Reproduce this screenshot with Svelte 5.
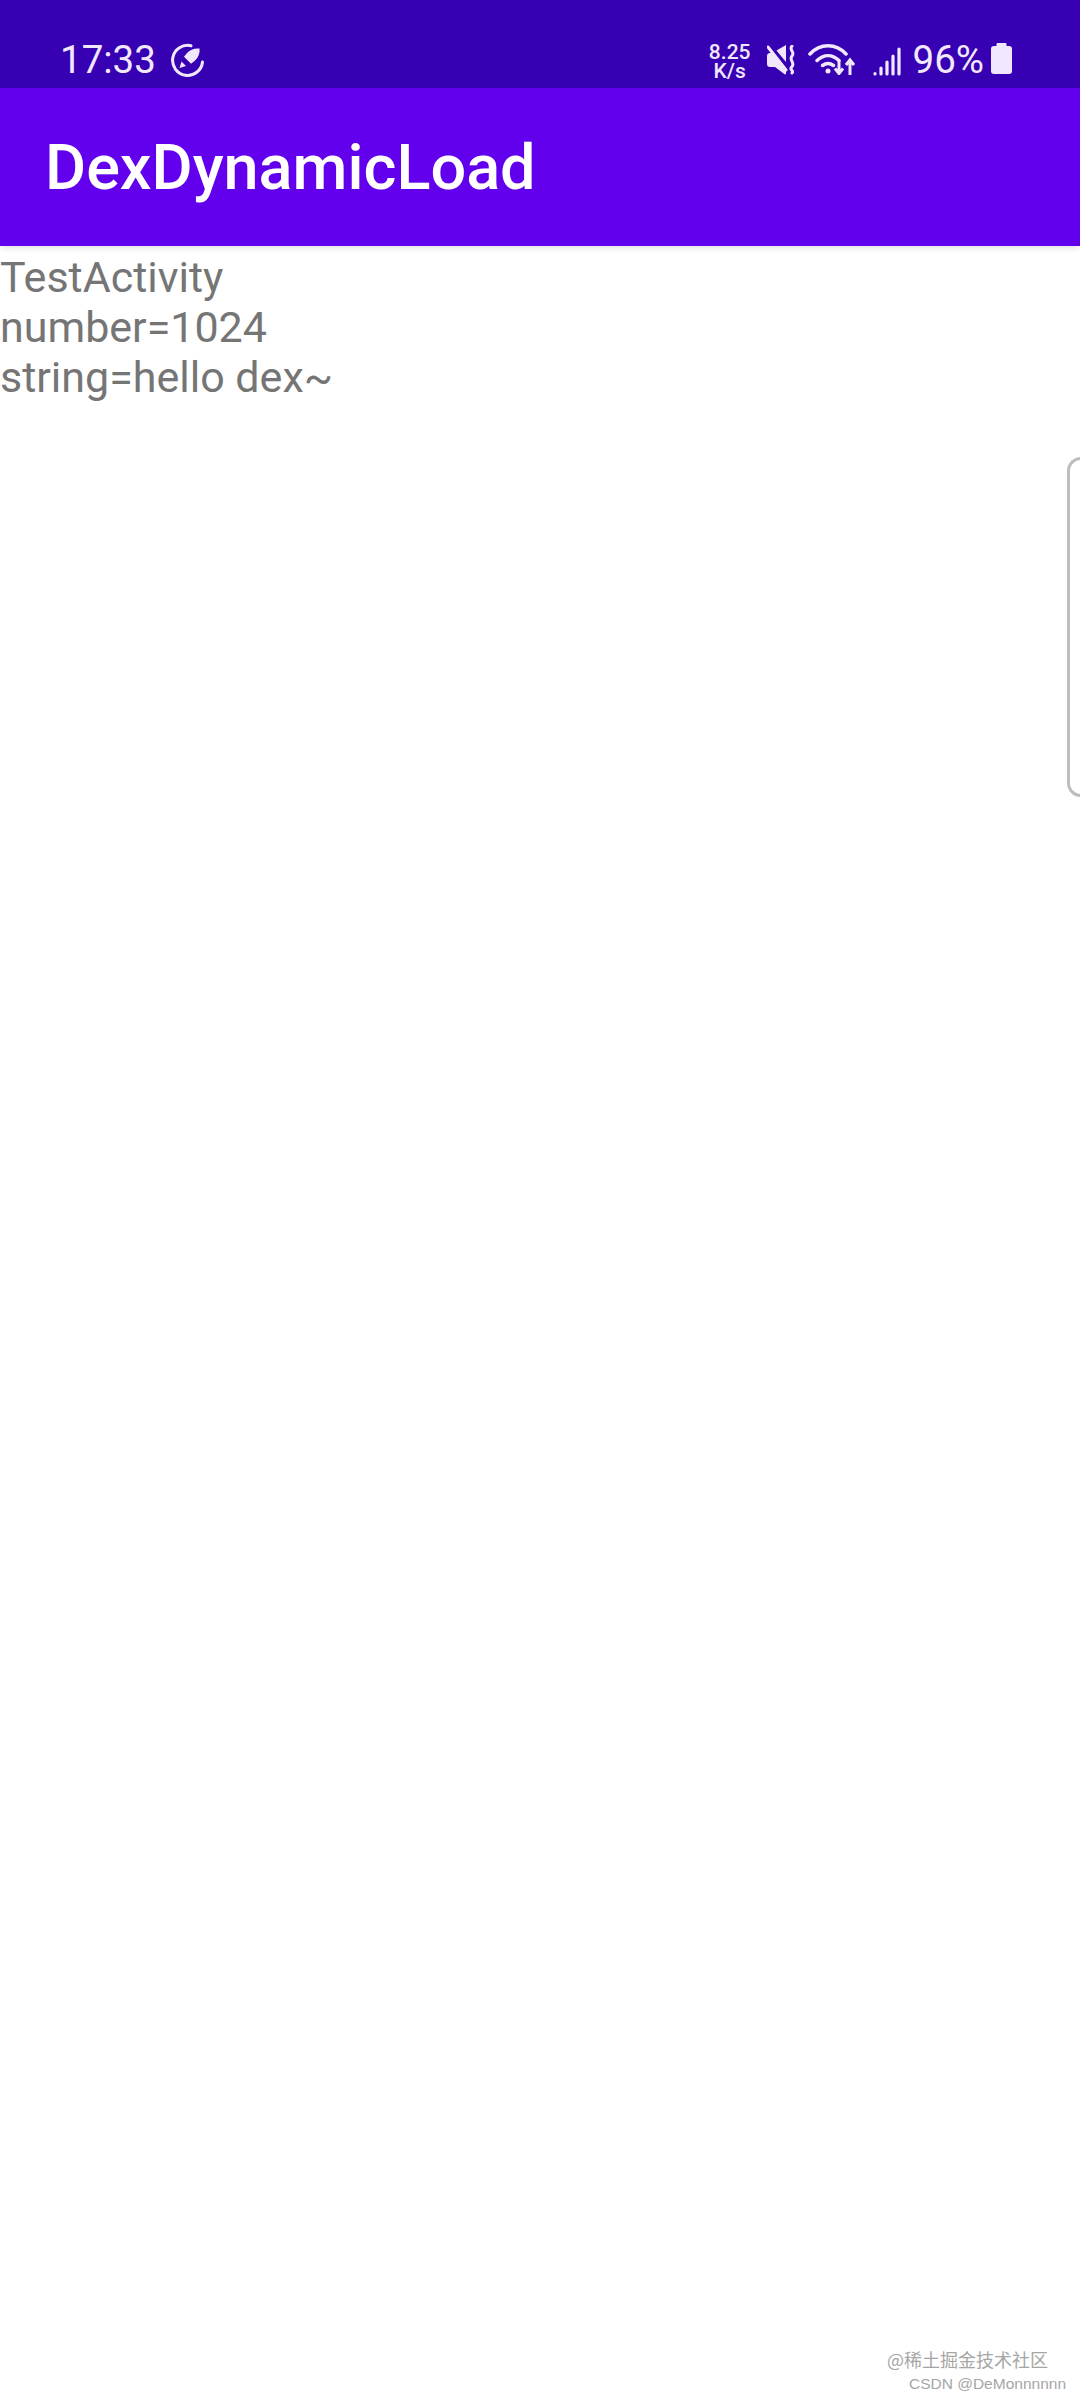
<script>
  const lines = ['TestActivity', 'number=1024', 'string=hello dex~'];
</script>

<div class="screen">
  <header class="status-bar">
    <div class="status-left">
      <span class="clock">17:33</span>
      <svg class="rocket" viewBox="0 0 34 34" width="34" height="34">
        <path d="M20 2.800A15 15 0 1 0 31.500 19" fill="none" stroke="currentColor" stroke-width="3" stroke-linecap="round" />
        <path d="M28.500 5.500c.5 5-1.300 9.500-5 12.500l-3.500 2.800-7-7 2.800-3.500c3-3.700 7.700-5.300 12.700-4.800z" fill="currentColor" />
        <path d="M10.500 18.500l4.500 4.500-6.500 2z" fill="currentColor" />
      </svg>
    </div>
    <div class="status-right">
      <div class="speed">8.25<br />K/s</div>
      <svg class="mute" viewBox="0 0 30 30" width="30" height="30">
        <path d="M0 11a3 3 0 0 1 3-3h2l14 17v4l-1 .5L8 22H3a3 3 0 0 1-3-3z" fill="currentColor" />
        <path d="M9.500 5.500L19 0v17z" fill="currentColor" />
        <path d="M1 2l18 23" stroke="currentColor" stroke-width="3" stroke-linecap="round" />
        <path d="M25 1c-3.500 4 3.500 6 0 10s3.500 7 0 10.500 2.500 4 0 6.500" fill="none" stroke="currentColor" stroke-width="3" stroke-linecap="round" />
      </svg>
      <svg class="wifi" viewBox="0 0 47 32" width="47" height="32">
        <g fill="none" stroke="currentColor" stroke-width="3.500" stroke-linecap="round">
          <path d="M2 11C12 0 28 0 38 11" />
          <path d="M9 17.500c7-6.500 15-6.500 22 0" />
          <path d="M14.500 22.500c3.500-2.500 7.500-2.500 11 0" />
        </g>
        <circle cx="20" cy="28" r="2.500" fill="currentColor" />
        <path d="M31 17v13M27 25.500l4 5 4-5" fill="none" stroke="currentColor" stroke-width="3" />
        <path d="M42 32V18M38 22l4-5 4 5" fill="none" stroke="currentColor" stroke-width="3" />
      </svg>
      <svg class="signal" viewBox="0 0 28 29" width="28" height="29">
        <g stroke="currentColor" stroke-width="3.200" stroke-linecap="round">
          <path d="M2 27v-.5" />
          <path d="M8 27v-6" />
          <path d="M14 27v-12" />
          <path d="M20 27v-18" />
          <path d="M26 27V2" />
        </g>
      </svg>
      <span class="battery-level">96%</span>
      <svg class="battery" viewBox="0 0 21 31" width="21" height="31">
        <path d="M6.500 0h8a1 1 0 0 1 1 1v2h2.500a3 3 0 0 1 3 3v22a3 3 0 0 1-3 3H3a3 3 0 0 1-3-3V6a3 3 0 0 1 3-3h2.500V1a1 1 0 0 1 1-1z" fill="currentColor" />
      </svg>
    </div>
  </header>

  <div class="toolbar">
    <h1>DexDynamicLoad</h1>
  </div>

  <main class="content">
    {#each lines as line}
      <div>{line}</div>
    {/each}
  </main>

  <div class="edge-handle"></div>

  <div class="watermark">
    <div class="juejin">@稀土掘金技术社区</div>
    <div class="csdn">CSDN @DeMonnnnnn</div>
  </div>
</div>

<style>
  :global(body) {
    margin: 0;
    background: #fff;
  }

  .screen {
    position: relative;
    width: 1080px;
    height: 2400px;
    overflow: hidden;
    background: #fff;
    font-family: Roboto, "Noto Sans", sans-serif;
  }

  .status-bar {
    height: 88px;
    box-sizing: border-box;
    padding: 43px 68px 0 60px;
    display: flex;
    justify-content: space-between;
    align-items: flex-start;
    background: #3700b3;
    color: #f1e8fd;
  }

  .status-left,
  .status-right {
    display: flex;
    align-items: flex-start;
  }

  .clock,
  .battery-level {
    font-size: 38.500px;
    line-height: 34px;
  }

  .rocket {
    margin-left: 15px;
  }

  .speed {
    text-align: center;
    font-size: 21px;
    font-weight: 500;
    line-height: 19px;
    margin: 0 16px 0 0;
  }

  .mute {
    margin: 2px 11px 0 0;
  }

  .wifi {
    margin: 0 18px 0 0;
  }

  .signal {
    margin: 4px 12px 0 0;
  }

  .battery-level {
    margin: 0 7px 0 0;
  }

  .toolbar {
    position: relative;
    height: 158px;
    box-sizing: border-box;
    padding: 2px 0 0 45px;
    display: flex;
    align-items: center;
    background: #6200ee;
    box-shadow: 0 2px 6px rgba(0, 0, 0, 0.12);
  }

  h1 {
    margin: 0;
    color: #fff;
    font-size: 63px;
    font-weight: 500;
    line-height: 70px;
  }

  .content {
    padding-top: 6px;
    color: #757575;
    font-size: 43px;
    line-height: 50px;
  }

  .edge-handle {
    position: absolute;
    top: 457px;
    right: -20px;
    width: 27px;
    height: 334px;
    border: 3px solid #bdbdbd;
    border-radius: 14px;
  }

  .watermark {
    position: absolute;
    right: 14px;
    bottom: 6px;
    display: flex;
    flex-direction: column;
    align-items: flex-end;
    color: #a6a6a6;
    font-family: "Liberation Sans", "Noto Sans CJK SC", sans-serif;
  }

  .juejin {
    margin-right: 18px;
    font-size: 18px;
    line-height: 30px;
    font-family: "Noto Sans CJK SC", sans-serif;
  }

  .csdn {
    font-size: 15.500px;
    line-height: 20px;
  }
</style>
